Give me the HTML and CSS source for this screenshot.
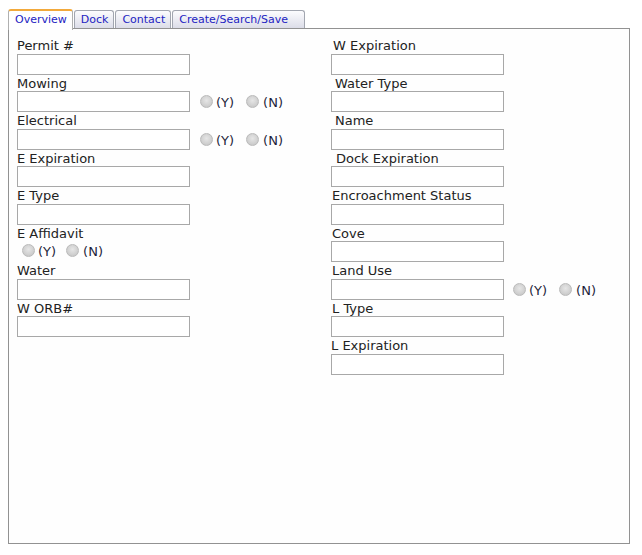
FILE: index.html
```html
<!DOCTYPE html>
<html>
<head>
<meta charset="utf-8">
<link rel="stylesheet" href="styles.css">
</head>
<body>
<div class="tabs">
  <div class="tab active">Overview</div>
  <div class="tab">Dock</div>
  <div class="tab">Contact</div>
  <div class="tab wide">Create/Search/Save</div>
</div>
<div class="panel">
  <div class="col">
    <div class="field"><div class="lbl">Permit #</div><div class="ctl"><span class="inp"></span></div></div>
    <div class="field"><div class="lbl">Mowing</div><div class="ctl"><span class="inp"></span><span class="radios after"><span class="radio"></span><span class="rt">(Y)</span><span class="radio second"></span><span class="rt">(N)</span></span></div></div>
    <div class="field"><div class="lbl">Electrical</div><div class="ctl"><span class="inp"></span><span class="radios after"><span class="radio"></span><span class="rt">(Y)</span><span class="radio second"></span><span class="rt">(N)</span></span></div></div>
    <div class="field"><div class="lbl">E Expiration</div><div class="ctl"><span class="inp"></span></div></div>
    <div class="field"><div class="lbl">E Type</div><div class="ctl"><span class="inp"></span></div></div>
    <div class="field"><div class="lbl">E Affidavit</div><div class="ctl"><span class="radios solo"><span class="radio"></span><span class="rt">(Y)</span><span class="radio second tight"></span><span class="rt">(N)</span></span></div></div>
    <div class="field"><div class="lbl">Water</div><div class="ctl"><span class="inp"></span></div></div>
    <div class="field"><div class="lbl">W ORB#</div><div class="ctl"><span class="inp"></span></div></div>
  </div>
  <div class="col">
    <div class="field"><div class="lbl s2">W Expiration</div><div class="ctl"><span class="inp"></span></div></div>
    <div class="field"><div class="lbl s4">Water Type</div><div class="ctl"><span class="inp"></span></div></div>
    <div class="field"><div class="lbl s4">Name</div><div class="ctl"><span class="inp"></span></div></div>
    <div class="field"><div class="lbl s5">Dock Expiration</div><div class="ctl"><span class="inp"></span></div></div>
    <div class="field"><div class="lbl s1">Encroachment Status</div><div class="ctl"><span class="inp"></span></div></div>
    <div class="field"><div class="lbl s1">Cove</div><div class="ctl"><span class="inp"></span></div></div>
    <div class="field"><div class="lbl s1">Land Use</div><div class="ctl"><span class="inp"></span><span class="radios after right"><span class="radio"></span><span class="rt">(Y)</span><span class="radio second"></span><span class="rt">(N)</span></span></div></div>
    <div class="field"><div class="lbl s1">L Type</div><div class="ctl"><span class="inp"></span></div></div>
    <div class="field"><div class="lbl">L Expiration</div><div class="ctl"><span class="inp"></span></div></div>
  </div>
</div>
</body>
</html>
```
FILE: styles.css
```css
html, body {
  margin: 0;
  padding: 0;
  background: #ffffff;
}
body {
  margin: 8px;
  font-family: "DejaVu Sans", Verdana, sans-serif;
  color: #222222;
}
.tabs {
  display: flex;
  align-items: flex-end;
  gap: 1px;
  height: 21px;
}
.tab {
  font-size: 11px;
  line-height: 17px;
  color: #2323c2;
  padding: 0 5px 0 6px;
  border: 1px solid #a2a6b0;
  border-bottom: none;
  border-radius: 3px 3px 0 0;
  background: linear-gradient(#fcfcfe, #dcdde8);
  margin-bottom: 1px;
  white-space: nowrap;
}
.tab.wide {
  padding-right: 16px;
}
.tab.active {
  position: relative;
  z-index: 1;
  background: #ffffff;
  border-top: 2px solid #f2a93b;
  border-left-color: #b0b0b0;
  border-right-color: #b0b0b0;
  padding-bottom: 2px;
  margin-bottom: -1px;
}
.panel {
  margin-top: -1px;
  border: 1px solid #929292;
  background: #fefefe;
  display: grid;
  grid-template-columns: 314px 1fr;
  align-items: start;
  padding: 8px 0 0 8px;
  box-sizing: border-box;
  height: 516px;
  width: 622px;
}
.field {
  display: flex;
  flex-direction: column;
}
.lbl {
  font-size: 13px;
  line-height: 18.5px;
  height: 16.5px;
  white-space: nowrap;
}
.lbl.s1 { padding-left: 1px; }
.lbl.s2 { padding-left: 2px; }
.lbl.s4 { padding-left: 4px; }
.lbl.s5 { padding-left: 5px; }
.ctl {
  display: flex;
  align-items: center;
  height: 21px;
}
.inp {
  display: block;
  width: 173px;
  height: 21px;
  box-sizing: border-box;
  border: 1px solid #a8a8a8;
  background: #ffffff;
  flex: none;
}
.radios {
  display: flex;
  align-items: center;
  font-size: 13px;
  line-height: 16px;
  color: #1e1e3c;
}
.radios.after {
  margin-left: 10px;
  margin-top: 3px;
}
.radios.after.right {
  margin-left: 9px;
}
.radios.solo {
  margin-left: 5px;
  margin-top: 1px;
}
.radio {
  display: block;
  width: 13px;
  height: 13px;
  box-sizing: border-box;
  border-radius: 50%;
  border: 1px solid #bababa;
  background: radial-gradient(circle at 50% 40%, #e6e6e6 0%, #d2d2d2 55%, #c0c0c0 100%);
  margin-right: 3px;
  margin-top: -3px;
  flex: none;
}
.radio.second {
  margin-left: 12px;
  margin-right: 4px;
}
.radio.second.tight {
  margin-left: 10px;
}
.rt {
  white-space: nowrap;
}
```
